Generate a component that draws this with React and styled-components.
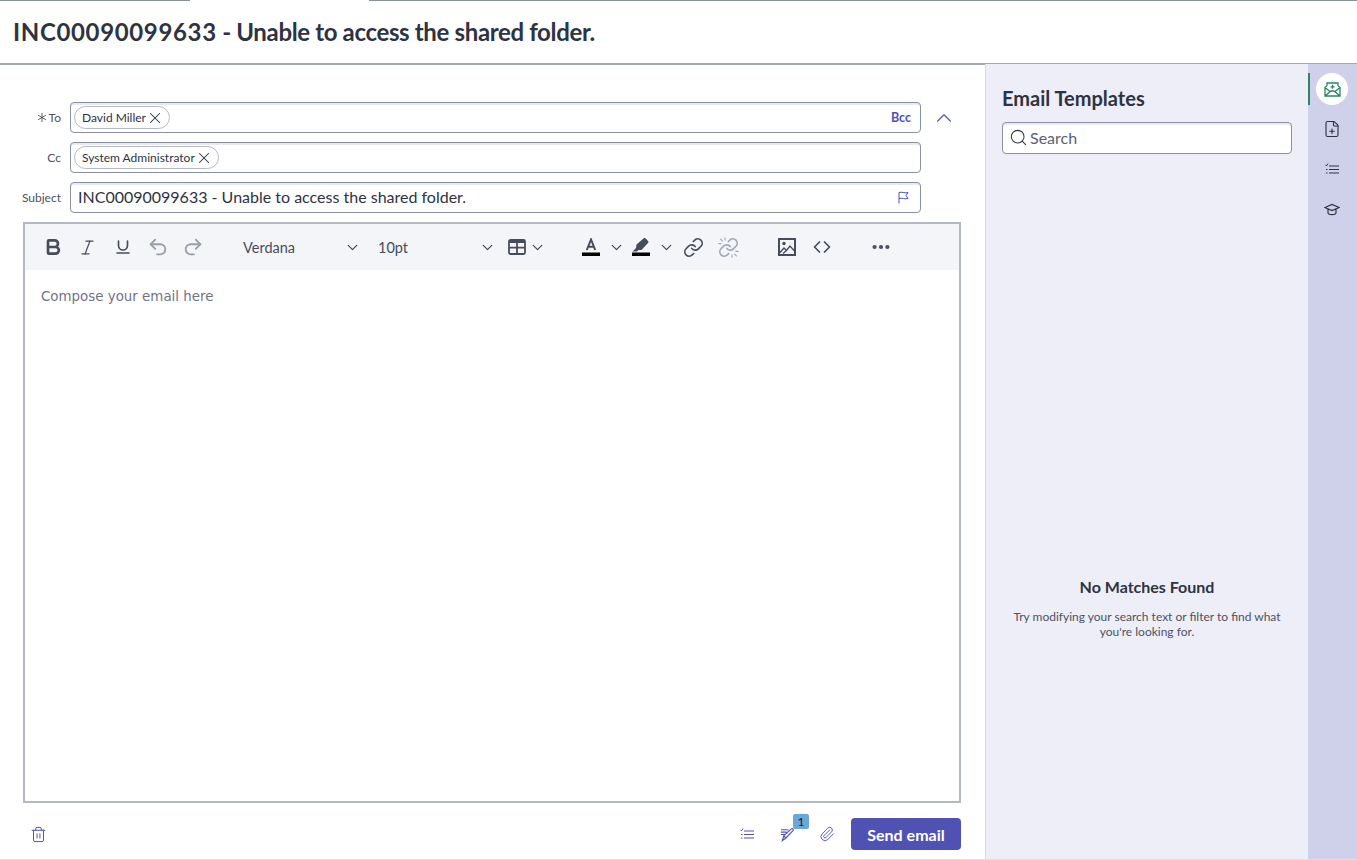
import React from 'react'
import styled, { createGlobalStyle } from 'styled-components'
import {
  Bold, Italic, Underline, Undo2, Redo2, ChevronDown, ChevronUp, X, Search,
  Link, FilePlus, Trash2, Paperclip, Ellipsis,
  ChevronLeft, ChevronRight,
} from 'lucide-react'

const GlobalStyle = createGlobalStyle`
  html, body { margin: 0; padding: 0; background: #fff; }
  body { font-family: Lato, "Liberation Sans", sans-serif; color: #2e3342; }
`

const Page = styled.div`
  width: 1357px;
  height: 860px;
  display: flex;
  flex-direction: column;
  overflow: hidden;
`

const TopStrip = styled.div`
  height: 1px;
  flex: none;
  display: grid;
  grid-template-columns: 190px 179px 1fr;
  & > span { background: #8b90a0; }
  & > span:nth-child(2) { background: #fff; }
`

const Header = styled.header`
  height: 61px;
  flex: none;
  display: flex;
  align-items: center;
  padding: 0 0 1px 13px;
  box-sizing: content-box;
  border-bottom: 2px solid #a5a9b6;
  margin-bottom: -1px;
`

const Title = styled.h1`
  margin: 0;
  font-size: 24px;
  font-weight: 700;
  letter-spacing: -0.35px;
  color: #2e3342;
`

const TitleId = styled.span`
  letter-spacing: 0.65px;
`

const Body = styled.div`
  flex: 1;
  display: flex;
  min-height: 0;
  border-bottom: 1px solid #dfe0e5;
`

const Composer = styled.main`
  width: 985px;
  flex: none;
  display: flex;
  flex-direction: column;
  padding: 38px 24px 0 23px;
  box-sizing: border-box;
`

const Fields = styled.div`
  display: flex;
  flex-direction: column;
  gap: 9px;
  margin-bottom: 9px;
`

const FieldRow = styled.div`
  display: flex;
  align-items: center;
  gap: 9px;
  margin-left: -23px;
`

const FieldLabel = styled.label`
  width: 61px;
  flex: none;
  display: flex;
  justify-content: flex-end;
  align-items: center;
  gap: 2px;
  font-size: 12px;
  color: #4d5262;
`

const FieldBox = styled.div`
  width: 851px;
  height: 31px;
  flex: none;
  box-sizing: border-box;
  display: flex;
  align-items: center;
  padding: 0 9px 0 3px;
  background: #fff;
  border: 1px solid #8b90a0;
  border-radius: 4px;
  box-shadow: inset 0 2px 0 #e9eaee;
`

const Chip = styled.span`
  height: 23px;
  box-sizing: border-box;
  display: inline-flex;
  align-items: center;
  padding: 0 5px 0 7px;
  border: 1px solid #b6bac6;
  border-radius: 12px;
  font-size: 12px;
  color: #2e3342;
`

const SubjectText = styled.span`
  flex: 1;
  padding: 0 0 2px 4px;
  font-size: 16px;
  color: #2e3342;
`

const BccLink = styled.span`
  margin-left: auto;
  font-size: 12.5px;
  font-weight: 700;
  color: #4f52b2;
`

const FlagSlot = styled.span`
  display: flex;
  color: #4f52b2;
  margin-right: 1px;
`

const CollapseButton = styled.span`
  margin-left: 1px;
  display: flex;
  color: #4f52b2;
`

const Editor = styled.section`
  width: 938px;
  height: 581px;
  flex: none;
  box-sizing: border-box;
  display: flex;
  flex-direction: column;
  border: 2px solid #b4b8c5;
`

const Toolbar = styled.div`
  height: 46px;
  flex: none;
  display: flex;
  align-items: center;
  padding-left: 10px;
  background: #f4f5f8;
  color: #474c5c;
`

const ToolButton = styled.span`
  width: ${({$w}) => $w || 35}px;
  margin-left: ${({$gap}) => $gap || 0}px;
  height: 30px;
  flex: none;
  display: flex;
  align-items: center;
  justify-content: center;
  color: ${({$muted}) => $muted ? '#9a9ea9' : '#474c5c'};
`

const CodeLeft = styled(ChevronLeft)`
  flex: none;
  margin-right: -5px;
`

const CodeRight = styled(ChevronRight)`
  flex: none;
  margin-left: -5px;
`

const Select = styled.span`
  width: ${({$w}) => $w}px;
  margin-left: ${({$gap}) => $gap || 0}px;
  flex: none;
  display: flex;
  align-items: center;
  justify-content: space-between;
  font-size: 14.5px;
  color: #474c5c;
`

const Placeholder = styled.div`
  padding: 19px 16px;
  font-family: "DejaVu Sans", Verdana, sans-serif;
  font-size: 13.4px;
  line-height: 16px;
  color: #6f7482;
`

const Footer = styled.footer`
  flex: 1;
  display: flex;
  align-items: center;
  padding-top: 6px;
  color: #4f52b2;
`

const FooterIcon = styled.span`
  position: relative;
  display: flex;
  margin-left: ${({$gap}) => $gap || 0}px;
`

const Badge = styled.span`
  position: absolute;
  top: -12px;
  left: 13px;
  width: 16px;
  height: 15px;
  display: flex;
  align-items: center;
  justify-content: center;
  background: #6ba7dc;
  border-radius: 2px;
  font-size: 12px;
  font-weight: 500;
  color: #20242f;
`

const Spacer = styled.span`
  flex: 1;
`

const SendButton = styled.button`
  width: 110px;
  height: 32px;
  margin-left: 16px;
  padding: 0;
  border: none;
  border-radius: 4px;
  background: #4f52b2;
  color: #fff;
  font-family: inherit;
  font-size: 16px;
  font-weight: 700;
`

const TemplatesPanel = styled.aside`
  width: 323px;
  flex: none;
  box-sizing: border-box;
  display: flex;
  flex-direction: column;
  padding: 22px 16px 0 16px;
  background: #eeeef8;
  border-left: 1px solid #d9dae2;
`

const PanelTitle = styled.h2`
  margin: 0 0 12px;
  font-size: 20px;
  line-height: 24px;
  font-weight: 700;
  color: #2e3342;
`

const SearchBox = styled.div`
  width: 290px;
  height: 32px;
  flex: none;
  box-sizing: border-box;
  display: flex;
  align-items: center;
  gap: 2px;
  padding: 0 0 2px 6px;
  background: #fff;
  border: 1px solid #8b90a0;
  border-radius: 4px;
  box-shadow: inset 0 2px 0 #e9eaee;
  font-size: 16px;
  color: #5c6170;
`

const SearchIcon = styled(Search)`
  color: #2e3342;
`

const EmptyState = styled.div`
  margin-top: 423px;
  width: 290px;
  text-align: center;
`

const EmptyTitle = styled.div`
  font-size: 16px;
  line-height: 20px;
  font-weight: 700;
  color: #2e3342;
  margin-bottom: 12px;
`

const EmptyText = styled.div`
  font-size: 12px;
  line-height: 15px;
  color: #4d5262;
`

const Rail = styled.nav`
  flex: 1;
  background: #cfd0ea;
  display: flex;
  flex-direction: column;
  align-items: center;
  padding: 9px 1px 0 0;
  gap: 8px;
  color: #2e3342;
`

const RailItem = styled.span`
  position: relative;
  width: 32px;
  height: 32px;
  display: flex;
  align-items: center;
  justify-content: center;
  border-radius: 50%;
  background: ${({$active}) => $active ? '#fff' : 'transparent'};
  color: ${({$active}) => $active ? '#2e8466' : 'inherit'};
  ${({$active}) => $active && `
    &::before {
      content: '';
      position: absolute;
      left: -8px;
      top: 0;
      width: 2px;
      height: 32px;
      background: #2e8466;
    }
  `}
`

const Star = () => (
  <svg width="10" height="11" viewBox="0 0 11 11" fill="none" stroke="#4d5262" strokeWidth="1">
    <path d="M5.5 .5v10M1.2 3l8.6 5M1.2 8l8.6-5" />
  </svg>
)

const FlagIcon = () => (
  <svg width="13" height="13" viewBox="0 0 13 13" fill="none" stroke="currentColor" strokeWidth="1">
    <path d="M2 12.5V1.5c3-1 5 1 9 0L9 4.500l2 3c-3 1-6-1-9 0" />
  </svg>
)

const TableIcon = () => (
  <svg width="18" height="16" viewBox="0 0 18 16" fill="none" stroke="currentColor" strokeWidth="1.800">
    <rect x="1" y="1" width="16" height="14" rx="1.500" />
    <path d="M1 8.700h16M9 3v12" />
    <path d="M1 2.500h16" strokeWidth="3" />
  </svg>
)

const ColorA = () => (
  <svg width="18" height="18" viewBox="0 0 18 18" fill="none">
    <path d="M4.800 12 9 1.500 13.200 12M6.200 8.800h5.600" stroke="#474c5c" strokeWidth="2" />
    <rect y="14.500" width="18" height="3.500" fill="#000" />
  </svg>
)

const Marker = () => (
  <svg width="18" height="18" viewBox="0 0 18 18">
    <path d="M4.500 6.500 11.500.5c.8-.6 1.600-.5 2.200.1l2.300 2.300c.6.7.6 1.500 0 2.200L9.500 12H6.500L5 13.500H.5L4 10z" fill="#474c5c" />
    <rect y="14.500" width="18" height="3.500" fill="#000" />
  </svg>
)

const BrokenLink = () => (
  <svg width="21" height="21" viewBox="0 0 24 24" fill="none" stroke="#a3a7b1" strokeWidth="1.900" strokeLinecap="round">
    <path d="M10 13a5 5 0 0 0 7.540.540l3-3a5 5 0 0 0-7.070-7.070l-1.720 1.710" />
    <path d="M14 11a5 5 0 0 0-7.540-.540l-3 3a5 5 0 0 0 7.070 7.070l1.710-1.710" />
    <path d="M3 2.500l2 2M1 7.500h2.500M8 .800v2.500M21 21.500l-2-2M23 16.500h-2.500M16 23.200v-2.500" strokeWidth="1.300" />
  </svg>
)

const PictureIcon = () => (
  <svg width="18" height="18" viewBox="0 0 18 18" fill="none" stroke="#474c5c" strokeWidth="2">
    <rect x="1" y="1" width="16" height="16" />
    <circle cx="6" cy="5.500" r="1.700" fill="#474c5c" stroke="none" />
    <path d="M1.500 15 6 10l2.500 2.500L12 8l5 5.500M5 15.500 8.500 12.500" strokeWidth="1.400" />
  </svg>
)

const EnvelopeIcon = () => (
  <svg width="17" height="15" viewBox="0 0 17 15" fill="none" stroke="currentColor" strokeWidth="1.300">
    <path d="M3 4V1h11v3M1 5l2-1M16 5l-2-1M1 5v9h15V5M1 5.500l5.500 4.500M16 5.500 10.500 10M1 14l6-5h3l6 5M8.500 2.800v4M6.500 4.800h4" />
  </svg>
)

const ChecklistIcon = ({ color = 'currentColor' }) => (
  <svg width="14" height="12" viewBox="0 0 14 12" fill="none" stroke={color} strokeWidth="1.200">
    <path d="M4 3h10M4 6.500h10M4 10h10M1 6.500h1.500M1 10h1.500" />
    <path d="M.5 1.800 1.500 3l1.500-2.500" strokeWidth=".9" />
  </svg>
)

const DraftIcon = () => (
  <svg width="16" height="16" viewBox="0 0 17 16" fill="none" stroke="currentColor" strokeWidth="1.200">
    <path d="M2.500 15 4 10 12 2.500c1-1 2.800.8 1.800 2L6 12.500zM4 10l2.500 2.500M1 3.500h8M1 6h6M1 8.500h4" />
  </svg>
)

const CapIcon = () => (
  <svg width="16" height="15" viewBox="0 0 16 15" fill="none" stroke="currentColor" strokeWidth="1.200">
    <path d="M1 5.500 8 2.500l7 3-7 3zM4 7v3.500c0 2.800 8 2.800 8 0V7" />
  </svg>
)

const App = () => (
  <Page>
    <GlobalStyle />
    <TopStrip><span /><span /><span /></TopStrip>
    <Header>
      <Title><TitleId>INC00090099633</TitleId> - Unable to access the shared folder.</Title>
    </Header>
    <Body>
      <Composer>
        <Fields>
          <FieldRow>
            <FieldLabel><Star />To</FieldLabel>
            <FieldBox>
              <Chip>David Miller <X size={18} strokeWidth={1.4} /></Chip>
              <BccLink>Bcc</BccLink>
            </FieldBox>
            <CollapseButton><ChevronUp size={26} strokeWidth={1} /></CollapseButton>
          </FieldRow>
          <FieldRow>
            <FieldLabel>Cc</FieldLabel>
            <FieldBox>
              <Chip>System Administrator <X size={18} strokeWidth={1.4} /></Chip>
            </FieldBox>
          </FieldRow>
          <FieldRow>
            <FieldLabel>Subject</FieldLabel>
            <FieldBox>
              <SubjectText>INC00090099633 - Unable to access the shared folder.</SubjectText>
              <FlagSlot><FlagIcon /></FlagSlot>
            </FieldBox>
          </FieldRow>
        </Fields>
        <Editor>
          <Toolbar>
            <ToolButton><Bold size={20} strokeWidth={3.2} /></ToolButton>
            <ToolButton><Italic size={19} strokeWidth={1.5} /></ToolButton>
            <ToolButton><Underline size={18} strokeWidth={2.2} /></ToolButton>
            <ToolButton $muted><Undo2 size={22} strokeWidth={2} /></ToolButton>
            <ToolButton $muted><Redo2 size={22} strokeWidth={2} /></ToolButton>
            <Select $w={118} $gap={33}>Verdana<ChevronDown size={17} strokeWidth={1.8} /></Select>
            <Select $w={118} $gap={17}>10pt<ChevronDown size={17} strokeWidth={1.8} /></Select>
            <ToolButton $w={20} $gap={11}><TableIcon /></ToolButton>
            <ToolButton $w={20}><ChevronDown size={17} strokeWidth={1.8} /></ToolButton>
            <ToolButton $w={20} $gap={34}><ColorA /></ToolButton>
            <ToolButton $w={30}><ChevronDown size={17} strokeWidth={1.8} /></ToolButton>
            <ToolButton $w={20}><Marker /></ToolButton>
            <ToolButton $w={30}><ChevronDown size={17} strokeWidth={1.8} /></ToolButton>
            <ToolButton $w={22} $gap={1}><Link size={21} strokeWidth={1.9} /></ToolButton>
            <ToolButton $w={22} $gap={13}><BrokenLink /></ToolButton>
            <ToolButton $w={20} $gap={38}><PictureIcon /></ToolButton>
            <ToolButton $w={20} $gap={15}>
              <CodeLeft size={20} strokeWidth={2.1} />
              <CodeRight size={20} strokeWidth={2.1} />
            </ToolButton>
            <ToolButton $w={22} $gap={38}><Ellipsis size={22} strokeWidth={2.6} /></ToolButton>
          </Toolbar>
          <Placeholder>Compose your email here</Placeholder>
        </Editor>
        <Footer>
          <FooterIcon $gap={7}><Trash2 size={17} strokeWidth={1.4} /></FooterIcon>
          <Spacer />
          <FooterIcon><ChecklistIcon /></FooterIcon>
          <FooterIcon $gap={26}>
            <DraftIcon />
            <Badge>1</Badge>
          </FooterIcon>
          <FooterIcon $gap={23}><Paperclip size={16} strokeWidth={1.4} /></FooterIcon>
          <SendButton>Send email</SendButton>
        </Footer>
      </Composer>
      <TemplatesPanel>
        <PanelTitle>Email Templates</PanelTitle>
        <SearchBox><SearchIcon size={19} strokeWidth={1.3} />Search</SearchBox>
        <EmptyState>
          <EmptyTitle>No Matches Found</EmptyTitle>
          <EmptyText>Try modifying your search text or filter to find what you're looking for.</EmptyText>
        </EmptyState>
      </TemplatesPanel>
      <Rail>
        <RailItem $active><EnvelopeIcon /></RailItem>
        <RailItem><FilePlus size={18} strokeWidth={1.5} /></RailItem>
        <RailItem><ChecklistIcon /></RailItem>
        <RailItem><CapIcon /></RailItem>
      </Rail>
    </Body>
  </Page>
)

export default App
